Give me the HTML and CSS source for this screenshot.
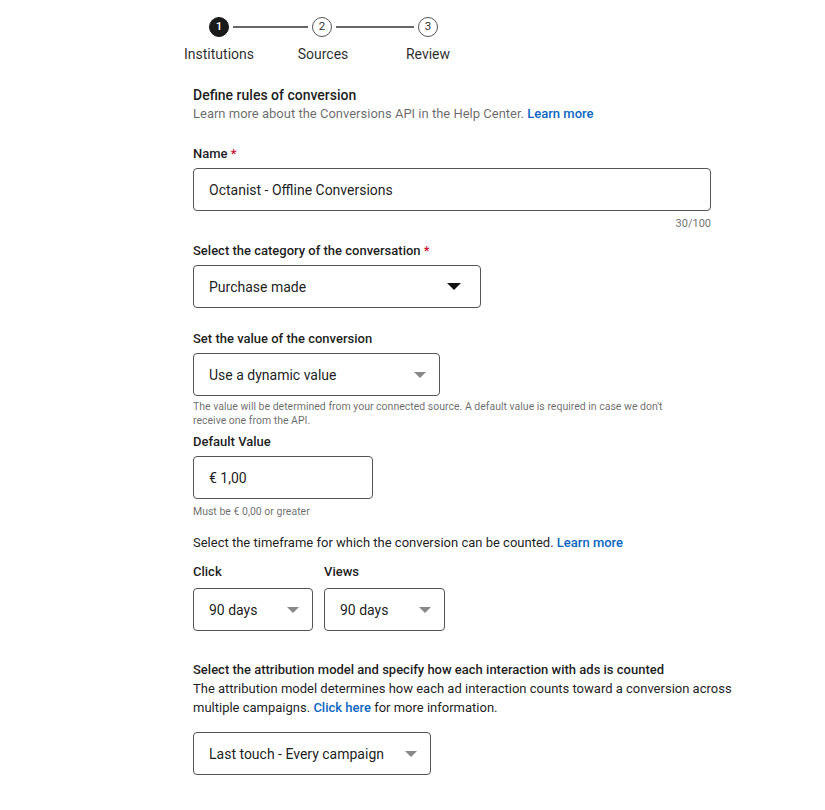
FILE: index.html
```
<!DOCTYPE html>
<html>
<head>
<meta charset="utf-8">
<link rel="stylesheet" href="styles.css">
</head>
<body>
<div class="stepper">
  <div class="step-row">
    <span class="dot dot-active">1</span>
    <span class="line line-a"></span>
    <span class="dot">2</span>
    <span class="line line-b"></span>
    <span class="dot">3</span>
  </div>
  <div class="step-labels">
    <span>Institutions</span>
    <span>Sources</span>
    <span>Review</span>
  </div>
</div>

<div class="form">
  <div class="intro">
    <h2 class="title">Define rules of conversion</h2>
    <p class="sub">Learn more about the Conversions API in the Help Center. <a class="link">Learn more</a></p>
  </div>

  <div class="field f-name">
    <label class="label">Name <span class="req">*</span></label>
    <div class="box box-full">Octanist - Offline Conversions</div>
    <div class="counter">30/100</div>
  </div>

  <div class="field f-cat">
    <label class="label">Select the category of the conversation <span class="req">*</span></label>
    <div class="box select w-288">Purchase made<span class="caret caret-dark"></span></div>
  </div>

  <div class="field f-val">
    <label class="label">Set the value of the conversion</label>
    <div class="box select w-247">Use a dynamic value<span class="caret"></span></div>
    <p class="help">The value will be determined from your connected source. A default value is required in case we don't receive one from the API.</p>
  </div>

  <div class="field f-def">
    <label class="label">Default Value</label>
    <div class="box w-180">€ 1,00</div>
    <p class="help help-one">Must be € 0,00 or greater</p>
  </div>

  <div class="field f-time">
    <p class="plain">Select the timeframe for which the conversion can be counted. <a class="link">Learn more</a></p>
    <div class="pair">
      <div class="col">
        <label class="label">Click</label>
        <div class="box select w-120">90 days<span class="caret"></span></div>
      </div>
      <div class="col">
        <label class="label">Views</label>
        <div class="box select w-121">90 days<span class="caret"></span></div>
      </div>
    </div>
  </div>

  <div class="field f-attr">
    <p class="label-strong">Select the attribution model and specify how each interaction with ads is counted</p>
    <p class="desc">The attribution model determines how each ad interaction counts toward a conversion across multiple campaigns. <a class="link">Click here</a> for more information.</p>
    <div class="box select w-238">Last touch - Every campaign<span class="caret"></span></div>
  </div>
</div>
</body>
</html>
```

FILE: styles.css
```
* { box-sizing: border-box; }
html, body { margin: 0; padding: 0; background: #fff; }
body {
  font-family: Roboto, "Liberation Sans", sans-serif;
  color: rgba(0,0,0,0.9);
  font-size: 13px;
}
p, h2 { margin: 0; }

.stepper { padding-top: 16px; }
.step-row {
  display: flex;
  align-items: center;
  margin-left: 209px;
  height: 22px;
}
.dot {
  width: 20px;
  height: 20px;
  border-radius: 50%;
  border: 1px solid #555;
  display: flex;
  align-items: center;
  justify-content: center;
  font-size: 11.5px;
  color: #333;
  background: #fff;
  line-height: 1;
}
.dot-active { background: #1a1a1a; border-color: #1a1a1a; color: #fff; font-weight: 500; }
.line { height: 2px; background: #666; margin: 0 4px; }
.line-a { width: 75px; }
.line-b { width: 78px; }
.step-labels {
  display: grid;
  grid-template-columns: 104px 104px 106px;
  margin-left: 167px;
  margin-top: 8px;
  font-size: 14px;
  color: rgba(0,0,0,0.85);
}
.step-labels span { text-align: center; }

.form { margin-left: 193px; width: 518px; }

.intro { margin-top: 24px; }
.title { font-size: 14px; font-weight: 500; line-height: 18px; }
.sub { font-size: 13px; color: rgba(0,0,0,0.6); line-height: 18px; margin-top: 1px; }
.link { color: #0a66c2; font-weight: 500; text-decoration: none; }

.label { display: block; font-size: 13px; font-weight: 500; line-height: 16px; }
.req { color: #cb112d; }

.box {
  height: 43px;
  border: 1px solid #555;
  border-radius: 4px;
  display: flex;
  align-items: center;
  padding: 0 15px;
  font-size: 14px;
  color: rgba(0,0,0,0.9);
  margin-top: 6px;
}
.box-full { width: 518px; }
.select { justify-content: space-between; }
.w-288 { width: 288px; }
.w-247 { width: 247px; }
.w-180 { width: 180px; }
.w-120 { width: 120px; }
.w-121 { width: 121px; }
.w-238 { width: 238px; }

.caret {
  width: 0; height: 0;
  border-left: 6px solid transparent;
  border-right: 6px solid transparent;
  border-top: 6px solid #888;
  margin-right: -2px;
}
.caret-dark { border-left-width: 7px; border-right-width: 7px; border-top: 7px solid #111; margin-right: 4px; }

.counter { text-align: right; font-size: 11px; color: rgba(0,0,0,0.6); margin-top: 6px; line-height: 14px; }

.f-name { margin-top: 23px; }
.f-cat { margin-top: 12px; }
.f-val { margin-top: 23px; }
.help { font-size: 10.5px; color: rgba(0,0,0,0.6); line-height: 14px; margin-top: 4px; width: 490px; }
.f-def { margin-top: 6px; }
.help-one { margin-top: 6px; }

.f-time { margin-top: 15px; }
.plain { font-size: 13px; line-height: 18px; }
.pair { display: flex; gap: 11px; margin-top: 12px; }
.col .label { margin-bottom: 8px; }
.col .box { margin-top: 0; }

.f-attr { margin-top: 30px; }
.label-strong { font-size: 13px; font-weight: 500; line-height: 18px; }
.desc { font-size: 13px; line-height: 19px; margin-top: 0; width: 540px; }
.f-attr .box { margin-top: 15px; }
```
